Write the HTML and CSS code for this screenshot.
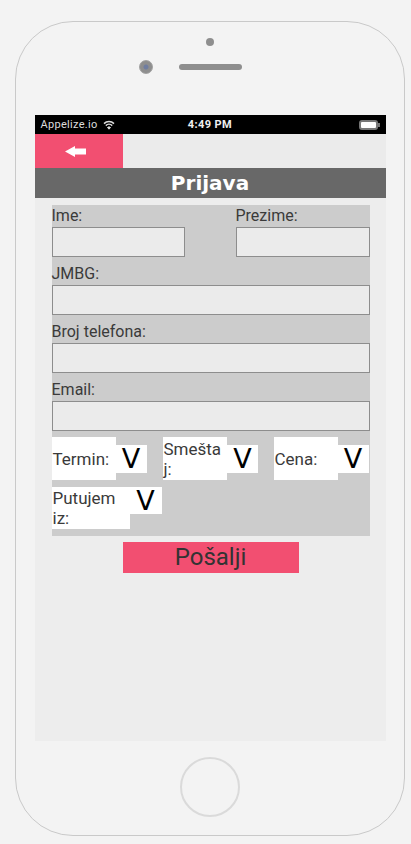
FILE: index.html
```html
<!DOCTYPE html>
<html lang="sr">
<head>
<meta charset="utf-8">
<title>Prijava</title>
<link rel="stylesheet" href="styles.css">
</head>
<body>
<div class="phone">
  <div class="sensor"></div>
  <div class="cam-row"><div class="camera"></div><div class="speaker"></div></div>
  <div class="screen">
    <div class="status">
      <div class="st-left">
        <span>Appelize.io</span>
        <svg class="wifi" width="12" height="10" viewBox="0 0 12 10"><path d="M1 3.6 A7.2 7.2 0 0 1 11 3.6" fill="none" stroke="#ddd" stroke-width="1.5"/><path d="M2.8 5.6 A4.6 4.6 0 0 1 9.2 5.6" fill="none" stroke="#ddd" stroke-width="1.5"/><path d="M4.5 7.5 A2.2 2.2 0 0 1 7.5 7.5 L6 9.2 Z" fill="#ddd" stroke="#ddd" stroke-width="1"/></svg>
      </div>
      <div class="st-time">4:49 PM</div>
      <div class="battery"><div class="bat-body"></div><div class="bat-nub"></div></div>
    </div>
    <div class="nav">
      <button class="back" type="button">
        <svg width="22" height="11" viewBox="0 0 22 11"><path d="M0 5.5 L10 0 L10 2.6 L21 2.6 L21 8.4 L10 8.4 L10 11 Z" fill="#fff"/></svg>
      </button>
    </div>
    <div class="title">Prijava</div>
    <div class="content">
      <form class="panel">
        <div class="row2">
          <div class="half"><label class="lbl">Ime:</label><div class="input"></div></div>
          <div class="half right"><label class="lbl">Prezime:</label><div class="input"></div></div>
        </div>
        <div class="field"><label class="lbl">JMBG:</label><div class="input"></div></div>
        <div class="field"><label class="lbl">Broj telefona:</label><div class="input"></div></div>
        <div class="field"><label class="lbl">Email:</label><div class="input"></div></div>
        <div class="selects">
          <div class="sel"><span class="sel-label">Termin:</span><span class="sel-btn">V</span></div>
          <div class="sel"><span class="sel-label narrow">Smešta j:</span><span class="sel-btn">V</span></div>
          <div class="sel"><span class="sel-label">Cena:</span><span class="sel-btn">V</span></div>
          <div class="sel wide"><span class="sel-label long">Putujem iz:</span><span class="sel-btn top">V</span></div>
        </div>
      </form>
      <button class="submit" type="button">Pošalji</button>
    </div>
  </div>
  <div class="home"></div>
</div>
</body>
</html>
```

FILE: styles.css
```css
body {
  margin: 0;
  background: #f3f3f3;
  font-family: Roboto, "Liberation Sans", sans-serif;
}

.phone {
  box-sizing: border-box;
  width: 390px;
  height: 815px;
  margin: 21px 0 0 15px;
  border: 1px solid #c9c9c9;
  border-radius: 58px;
  display: flex;
  flex-direction: column;
  align-items: center;
}

.sensor {
  width: 8px;
  height: 8px;
  border-radius: 50%;
  background: #8e8e8e;
  margin-top: 16px;
}

.cam-row {
  align-self: flex-start;
  margin: 14px 0 0 123px;
  height: 14px;
  display: flex;
  align-items: center;
  gap: 26px;
}

.camera {
  box-sizing: border-box;
  width: 14px;
  height: 14px;
  border-radius: 50%;
  background: radial-gradient(circle, #6f7da0 0 2px, #8e8e8e 3px);
  border: 1px solid #a0a0a0;
}

.speaker {
  width: 63px;
  height: 6px;
  border-radius: 3px;
  background: #8e8e8e;
}

.screen {
  margin-top: 41px;
  width: 351px;
  height: 626px;
  display: flex;
  flex-direction: column;
  background: #ededed;
}

.status {
  height: 19px;
  background: #000;
  color: #dcdcdc;
  display: grid;
  grid-template-columns: 1fr auto 1fr;
  align-items: center;
  padding: 0 6px;
  font-size: 11px;
}

.st-left {
  display: flex;
  align-items: center;
  gap: 5px;
  letter-spacing: 0.3px;
}

.st-time {
  color: #f0f0f0;
  font-weight: bold;
  letter-spacing: 0.4px;
}

.battery {
  justify-self: end;
  display: flex;
  align-items: center;
}

.bat-body {
  box-sizing: border-box;
  width: 19px;
  height: 10px;
  border: 2px solid #777;
  border-radius: 3px;
  background: #fff;
}

.bat-nub {
  width: 2px;
  height: 4px;
  background: #777;
}

.nav {
  height: 34px;
  background: #ebebeb;
  display: flex;
}

.back {
  width: 88px;
  border: 0;
  margin: 0;
  padding: 0 0 0 30px;
  background: #f24f71;
  display: flex;
  align-items: center;
  justify-content: flex-start;
}

.title {
  height: 30px;
  background: #686868;
  color: #fff;
  font-family: "DejaVu Sans", sans-serif;
  font-weight: bold;
  font-size: 20px;
  line-height: 30px;
  text-align: center;
}

.content {
  flex: 1;
  display: flex;
  flex-direction: column;
  align-items: flex-start;
  padding: 7px 0 0 17px;
}

.panel {
  box-sizing: border-box;
  width: 318px;
  margin: 0;
  background: #cccccc;
  padding-bottom: 7px;
}

.row2 {
  display: flex;
  justify-content: space-between;
  align-items: flex-start;
}

.half {
  width: 133px;
}

.half.right {
  width: 134px;
}

.field {
  margin-top: 6px;
}

.lbl {
  display: block;
  height: 22px;
  line-height: 22px;
  font-size: 16px;
  color: #3a3a3a;
}

.input {
  box-sizing: border-box;
  height: 30px;
  border: 1px solid #8d8d8d;
  background: #ebebeb;
}

.selects {
  margin-top: 6px;
  display: grid;
  grid-template-columns: repeat(3, 95px);
  grid-template-rows: 43px 42px;
  column-gap: 16px;
  row-gap: 7px;
}

.sel {
  display: flex;
  align-items: flex-start;
}

.sel.wide {
  grid-column: span 2;
}

.sel-label {
  box-sizing: border-box;
  flex: 0 0 64px;
  height: 100%;
  background: #fff;
  color: #3a3a3a;
  font-size: 17px;
  line-height: 20px;
  padding: 0 1px;
  display: flex;
  align-items: center;
}

.sel-label.narrow {
  padding-right: 6px;
}

.sel-label.long {
  flex-basis: 78px;
}

.sel-btn {
  box-sizing: border-box;
  flex: 0 0 31px;
  height: 28px;
  margin-top: 8px;
  background: #fff;
  color: #000;
  font-family: "DejaVu Sans", sans-serif;
  font-weight: 400;
  font-size: 27px;
  line-height: 28px;
  text-align: center;
}

.sel-btn.top {
  flex-basis: 32px;
  height: 27px;
  margin-top: 0;
}

.submit {
  margin: 6px 0 0 71px;
  width: 176px;
  height: 31px;
  padding: 0;
  border: 0;
  background: #f24f71;
  color: #333;
  font-family: Roboto, "Liberation Sans", sans-serif;
  font-size: 24px;
  line-height: 31px;
}

.home {
  box-sizing: border-box;
  margin-top: 16px;
  width: 60px;
  height: 60px;
  border: 2px solid #dadada;
  border-radius: 50%;
}
```
